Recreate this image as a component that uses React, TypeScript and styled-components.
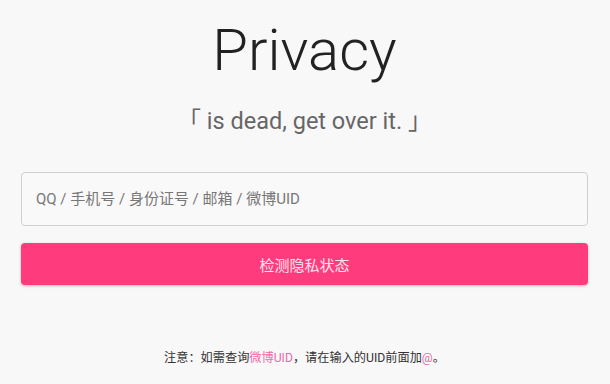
import styled, { createGlobalStyle } from "styled-components";

const GlobalStyle = createGlobalStyle`
  html, body {
    margin: 0;
    padding: 0;
    background: #f8f8f8;
  }
  body {
    font-family: Roboto, "Noto Sans CJK SC", sans-serif;
  }
`;

const Page = styled.main`
  width: 610px;
  height: 384px;
  box-sizing: border-box;
  padding: 16px 22px 0 21px;
  display: flex;
  flex-direction: column;
  align-items: stretch;
`;

const Title = styled.h1`
  margin: 0;
  text-align: center;
  font-family: Roboto, sans-serif;
  font-weight: 300;
  font-size: 58px;
  line-height: 68px;
  color: #222;
`;

const Slogan = styled.p`
  margin: 22px 0 0;
  text-align: center;
  font-family: Roboto, "Noto Sans CJK SC", sans-serif;
  font-size: 23.5px;
  line-height: 30px;
  color: #666;
`;

const Form = styled.form`
  margin-top: 36px;
  display: flex;
  flex-direction: column;
  gap: 17px;
`;

const Input = styled.input`
  box-sizing: border-box;
  height: 54px;
  padding: 0 14px;
  border: 1px solid #cfcfcf;
  border-radius: 4px;
  background: #f9f9f9;
  font-family: Roboto, "Noto Sans CJK SC", sans-serif;
  font-size: 15px;
  color: #333;
  outline: none;

  &::placeholder {
    color: #777;
  }
`;

const Submit = styled.button`
  height: 42px;
  border: none;
  border-radius: 4px;
  background: #fe3c7d;
  color: #fde4ee;
  font-family: "Noto Sans CJK SC", sans-serif;
  font-size: 15px;
  box-shadow: 0 1px 3px rgba(0, 0, 0, 0.25);
  cursor: pointer;
`;

const Note = styled.p`
  margin: 64px 0 0;
  text-align: center;
  font-family: Roboto, "Noto Sans CJK SC", sans-serif;
  font-size: 12.2px;
  line-height: 18px;
  color: #333;
`;

const Accent = styled.span`
  color: #ec6aa8;
`;

export default function App() {
  return (
    <>
      <GlobalStyle />
      <Page>
        <Title>Privacy</Title>
        <Slogan>「 is dead, get over it. 」</Slogan>
        <Form onSubmit={(e) => e.preventDefault()}>
          <Input placeholder="QQ / 手机号 / 身份证号 / 邮箱 / 微博UID" />
          <Submit type="submit">检测隐私状态</Submit>
        </Form>
        <Note>
          注意：如需查询<Accent>微博UID</Accent>，请在输入的UID前面加<Accent>@</Accent>。
        </Note>
      </Page>
    </>
  );
}
